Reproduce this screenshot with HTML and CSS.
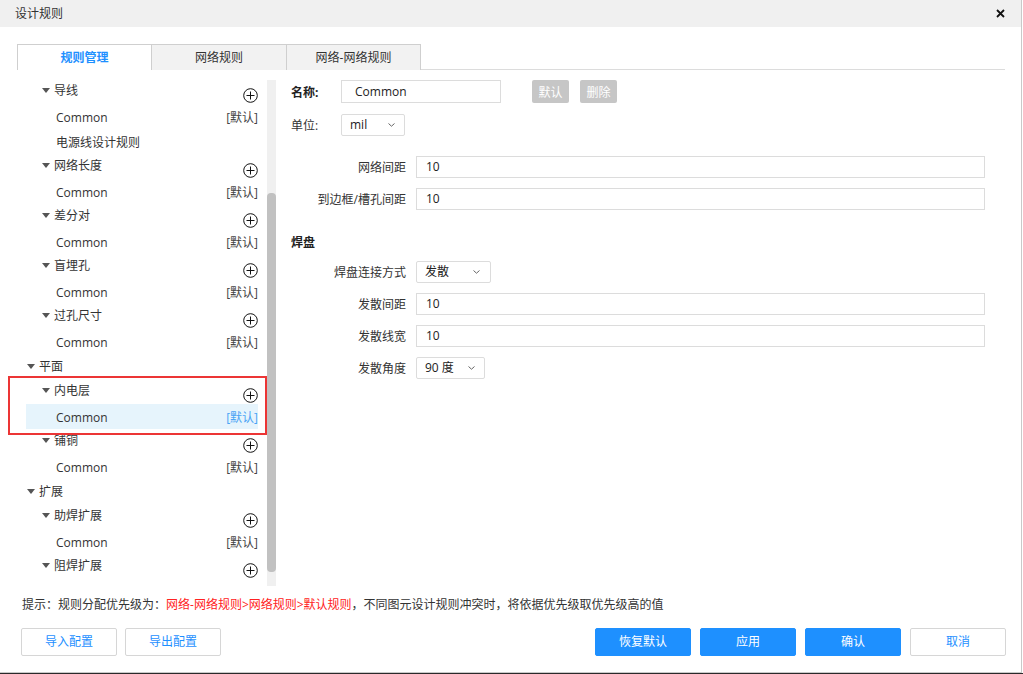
FILE: index.html
```html
<!DOCTYPE html>
<html>
<head>
<meta charset="utf-8">
<link rel="stylesheet" href="styles.css">
</head>
<body>
<div class="dialog">
  <div class="titlebar">
    <span>设计规则</span>
    <svg class="close" width="9" height="9" viewBox="0 0 9 9"><path d="M1 1L8 8M8 1L1 8" stroke="#111" stroke-width="1.8"/></svg>
  </div>
  <div class="tabs">
    <div class="tab active">规则管理</div>
    <div class="tab">网络规则</div>
    <div class="tab">网络-网络规则</div>
  </div>
  <div class="main">
    <div class="tree-wrap">
      <div class="tree">
        <div class="row l2"><span class="arrow"></span><span class="txt">导线</span><svg class="plus" width="15" height="15" viewBox="0 0 15 15"><circle cx="7.5" cy="7.5" r="6.8" fill="none" stroke="#111" stroke-width="1"/><path d="M7.5 3.5V11.5M3.5 7.5H11.5" stroke="#111" stroke-width="1"/></svg></div>
        <div class="row leaf"><span class="txt">Common</span><span class="tag">[默认]</span></div>
        <div class="row leaf"><span class="txt">电源线设计规则</span></div>
        <div class="row l2"><span class="arrow"></span><span class="txt">网络长度</span><svg class="plus" width="15" height="15" viewBox="0 0 15 15"><circle cx="7.5" cy="7.5" r="6.8" fill="none" stroke="#111" stroke-width="1"/><path d="M7.5 3.5V11.5M3.5 7.5H11.5" stroke="#111" stroke-width="1"/></svg></div>
        <div class="row leaf"><span class="txt">Common</span><span class="tag">[默认]</span></div>
        <div class="row l2"><span class="arrow"></span><span class="txt">差分对</span><svg class="plus" width="15" height="15" viewBox="0 0 15 15"><circle cx="7.5" cy="7.5" r="6.8" fill="none" stroke="#111" stroke-width="1"/><path d="M7.5 3.5V11.5M3.5 7.5H11.5" stroke="#111" stroke-width="1"/></svg></div>
        <div class="row leaf"><span class="txt">Common</span><span class="tag">[默认]</span></div>
        <div class="row l2"><span class="arrow"></span><span class="txt">盲埋孔</span><svg class="plus" width="15" height="15" viewBox="0 0 15 15"><circle cx="7.5" cy="7.5" r="6.8" fill="none" stroke="#111" stroke-width="1"/><path d="M7.5 3.5V11.5M3.5 7.5H11.5" stroke="#111" stroke-width="1"/></svg></div>
        <div class="row leaf"><span class="txt">Common</span><span class="tag">[默认]</span></div>
        <div class="row l2"><span class="arrow"></span><span class="txt">过孔尺寸</span><svg class="plus" width="15" height="15" viewBox="0 0 15 15"><circle cx="7.5" cy="7.5" r="6.8" fill="none" stroke="#111" stroke-width="1"/><path d="M7.5 3.5V11.5M3.5 7.5H11.5" stroke="#111" stroke-width="1"/></svg></div>
        <div class="row leaf"><span class="txt">Common</span><span class="tag">[默认]</span></div>
        <div class="row l1"><span class="arrow"></span><span class="txt">平面</span></div>
        <div class="row l2"><span class="arrow"></span><span class="txt">内电层</span><svg class="plus" width="15" height="15" viewBox="0 0 15 15"><circle cx="7.5" cy="7.5" r="6.8" fill="none" stroke="#111" stroke-width="1"/><path d="M7.5 3.5V11.5M3.5 7.5H11.5" stroke="#111" stroke-width="1"/></svg></div>
        <div class="row leaf selected"><span class="txt">Common</span><span class="tag">[默认]</span></div>
        <div class="row l2"><span class="arrow"></span><span class="txt">铺铜</span><svg class="plus" width="15" height="15" viewBox="0 0 15 15"><circle cx="7.5" cy="7.5" r="6.8" fill="none" stroke="#111" stroke-width="1"/><path d="M7.5 3.5V11.5M3.5 7.5H11.5" stroke="#111" stroke-width="1"/></svg></div>
        <div class="row leaf"><span class="txt">Common</span><span class="tag">[默认]</span></div>
        <div class="row l1"><span class="arrow"></span><span class="txt">扩展</span></div>
        <div class="row l2"><span class="arrow"></span><span class="txt">助焊扩展</span><svg class="plus" width="15" height="15" viewBox="0 0 15 15"><circle cx="7.5" cy="7.5" r="6.8" fill="none" stroke="#111" stroke-width="1"/><path d="M7.5 3.5V11.5M3.5 7.5H11.5" stroke="#111" stroke-width="1"/></svg></div>
        <div class="row leaf"><span class="txt">Common</span><span class="tag">[默认]</span></div>
        <div class="row l2"><span class="arrow"></span><span class="txt">阻焊扩展</span><svg class="plus" width="15" height="15" viewBox="0 0 15 15"><circle cx="7.5" cy="7.5" r="6.8" fill="none" stroke="#111" stroke-width="1"/><path d="M7.5 3.5V11.5M3.5 7.5H11.5" stroke="#111" stroke-width="1"/></svg></div>
      </div>
      <div class="scrollbar"><div class="thumb"></div></div>
      <div class="mark"></div>
    </div>
    <div class="form">
      <div class="name-row">
        <span class="lbl-bold">名称:</span>
        <div class="input name-input">Common</div>
        <div class="gbtn first">默认</div>
        <div class="gbtn">删除</div>
      </div>
      <div class="unit-row">
        <span class="lbl-unit">单位:</span>
        <div class="select unit-select"><span>mil</span><svg width="7" height="4" viewBox="0 0 7 4"><path d="M0.5 0.5L3.5 3.2L6.5 0.5" fill="none" stroke="#666" stroke-width="1"/></svg></div>
      </div>
      <div class="field first-field"><span class="flabel">网络间距</span><div class="input wide">10</div></div>
      <div class="field"><span class="flabel">到边框/槽孔间距</span><div class="input wide">10</div></div>
      <div class="heading">焊盘</div>
      <div class="field after-heading"><span class="flabel">焊盘连接方式</span><div class="select pad-select"><span>发散</span><svg width="7" height="4" viewBox="0 0 7 4"><path d="M0.5 0.5L3.5 3.2L6.5 0.5" fill="none" stroke="#666" stroke-width="1"/></svg></div></div>
      <div class="field"><span class="flabel">发散间距</span><div class="input wide">10</div></div>
      <div class="field"><span class="flabel">发散线宽</span><div class="input wide">10</div></div>
      <div class="field"><span class="flabel">发散角度</span><div class="select angle-select"><span>90 度</span><svg width="7" height="4" viewBox="0 0 7 4"><path d="M0.5 0.5L3.5 3.2L6.5 0.5" fill="none" stroke="#666" stroke-width="1"/></svg></div></div>
    </div>
  </div>
  <div class="hint">提示：规则分配优先级为：<span class="red">网络-网络规则&gt;网络规则&gt;默认规则</span>，不同图元设计规则冲突时，将依据优先级取优先级高的值</div>
  <div class="footer">
    <div class="btn">导入配置</div>
    <div class="btn">导出配置</div>
    <div class="spacer"></div>
    <div class="btn primary">恢复默认</div>
    <div class="btn primary">应用</div>
    <div class="btn primary">确认</div>
    <div class="btn">取消</div>
  </div>
</div>
<div class="edge"></div>
</body>
</html>
```

FILE: styles.css
```css
* { box-sizing: border-box; }
html, body { margin: 0; padding: 0; }
body {
  font-family: "Open Sans", "Noto Sans CJK SC", sans-serif;
  font-size: 12px;
  color: #333;
  background: #fff;
  width: 1023px;
  height: 674px;
  overflow: hidden;
}
.dialog {
  width: 1022px;
  height: 673px;
  border-right: 1px solid #c9c9c9;
  border-bottom: 1px solid #c9c9c9;
  display: flex;
  flex-direction: column;
}
.titlebar {
  height: 27px;
  flex: none;
  background: #f0f0f0;
  display: flex;
  align-items: center;
  justify-content: space-between;
  padding: 0 16px 0 15px;
  line-height: 16px;
}
.close { display: block; }
.tabs {
  display: flex;
  flex: none;
  margin: 17px 16px 0 17px;
  height: 26px;
  border-bottom: 1px solid #dcdcdc;
}
.tab {
  width: 135px;
  height: 26px;
  border: 1px solid #cfcfcf;
  border-bottom: none;
  background: #f2f2f2;
  display: flex;
  align-items: center;
  justify-content: center;
  line-height: 16px;
  color: #333;
}
.tab + .tab { margin-left: -1px; width: 136px; }
.tab:last-child { width: 135px; }
.tab.active {
  background: #fff;
  color: #1e90ff;
  font-weight: 700;
  position: relative;
  margin-bottom: -1px;
  height: 26px;
}
.main {
  display: flex;
  flex: none;
  margin-top: 10px;
  height: 506px;
}
.tree-wrap {
  position: relative;
  width: 276px;
  height: 506px;
  display: flex;
  flex: none;
}
.tree {
  width: 267px;
  height: 506px;
  overflow: hidden;
  margin-top: -1px;
}
.row {
  height: 25px;
  display: flex;
  align-items: center;
  padding-right: 9px;
  line-height: 16px;
  color: #333;
}
.row .txt { flex: 1; }
.arrow {
  width: 0;
  height: 0;
  border-left: 4px solid transparent;
  border-right: 4px solid transparent;
  border-top: 5px solid #555;
  margin-right: 4px;
  margin-top: -1px;
}
.l1 { padding-left: 27px; }
.l2 { padding-left: 42px; }
.l2 .txt { margin-top: -1px; }
.l2 .arrow { margin-top: -3px; }
.leaf { margin-left: 26px; padding-left: 30px; padding-right: 0; width: 232px; }
.leaf .txt { margin-top: 2px; }
.leaf .tag { margin-top: 2px; }
.plus { display: block; margin-top: 8px; }
.tag { color: #444; }
.selected { background: #e6f4fc; }
.selected .tag { color: #4aa3f5; }
.scrollbar {
  width: 9px;
  height: 506px;
  background: #f0f0f0;
  display: flex;
  flex-direction: column;
}
.thumb {
  margin-top: 113px;
  height: 379px;
  background: #c1c1c1;
  border-radius: 4px;
}
.mark {
  position: absolute;
  left: 8px;
  top: 296px;
  width: 259px;
  height: 59px;
  border: 2px solid #ec3535;
}
.form {
  margin-left: 15px;
  width: 694px;
}
.name-row {
  display: flex;
  align-items: center;
  height: 23px;
}
.lbl-bold { width: 50px; font-weight: 700; color: #222; }
.input {
  height: 22px;
  border: 1px solid #dcdcdc;
  display: flex;
  align-items: center;
  padding-left: 9px;
  line-height: 16px;
  color: #222;
}
.name-input { width: 160px; height: 23px; padding-left: 13px; }
.gbtn {
  width: 37px;
  height: 23px;
  background: #c6c6c6;
  color: #fff;
  border-radius: 2px;
  display: flex;
  align-items: center;
  justify-content: center;
  margin-left: 11px;
}
.gbtn.first { margin-left: 31px; }
.unit-row {
  display: flex;
  align-items: center;
  height: 22px;
  margin-top: 11px;
}
.lbl-unit { width: 50px; }
.select {
  height: 22px;
  border: 1px solid #dcdcdc;
  display: flex;
  align-items: center;
  justify-content: space-between;
  padding: 0 9px 0 8px;
  line-height: 16px;
  color: #222;
  border-radius: 2px;
}
.unit-select { width: 64px; }
.pad-select { width: 75px; padding-right: 10px; }
.angle-select { width: 69px; }
.field {
  display: flex;
  align-items: center;
  height: 22px;
  margin-top: 10px;
}
.first-field { margin-top: 20px; }
.flabel {
  width: 115px;
  text-align: right;
  margin-right: 10px;
  color: #333;
}
.wide { width: 569px; }
.heading {
  font-weight: 700;
  color: #222;
  height: 18px;
  line-height: 18px;
  margin-top: 24px;
}
.after-heading { margin-top: 9px; }
.hint {
  margin: 11px 0 0 22px;
  line-height: 16px;
  height: 16px;
  color: #333;
}
.red { color: #ff2222; }
.footer {
  display: flex;
  margin-top: 15px;
  padding: 0 15px 0 21px;
  gap: 8px;
}
.spacer { flex: 1; }
.btn {
  width: 96px;
  height: 28px;
  border: 1px solid #d6d6d6;
  border-radius: 2px;
  background: #fff;
  color: #1e90ff;
  display: flex;
  align-items: center;
  justify-content: center;
  line-height: 16px;
}
.btn.primary + .btn { margin-left: 1px; }
.btn.primary {
  background: #1e90ff;
  border-color: #1e90ff;
  color: #fff;
}
.edge { height: 1px; width: 1023px; background: #2a2a2a; }
```
